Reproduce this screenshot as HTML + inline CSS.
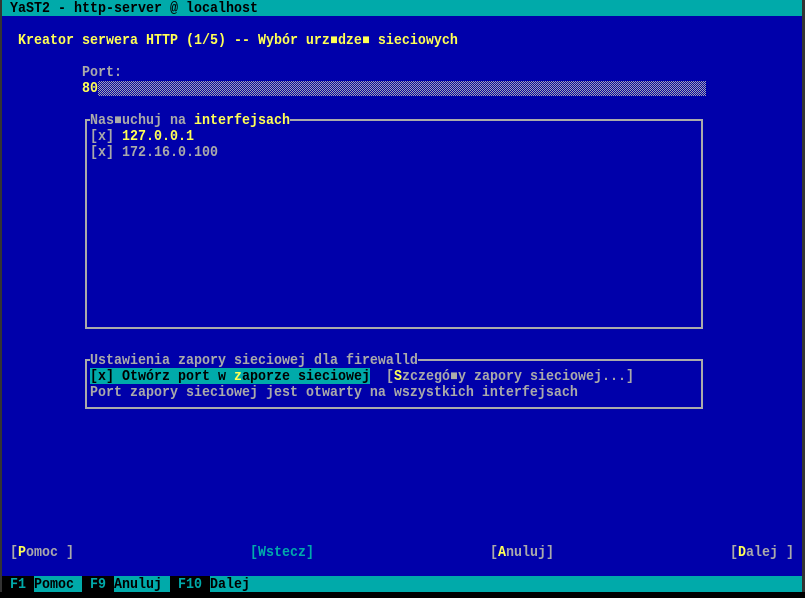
<!DOCTYPE html>
<html><head><meta charset="utf-8"><style>
html,body{margin:0;padding:0;background:#000;}
#s{position:relative;width:805px;height:598px;background:#000;overflow:hidden;font-family:"Liberation Mono","DejaVu Sans Mono",monospace;font-size:13.33px;line-height:16px;font-weight:bold;}
#scr{position:absolute;left:2px;top:0;width:800px;height:592px;background:#0000aa;}
#edge{position:absolute;left:0;top:0;width:2px;height:592px;background:#333;}
#edgeR{position:absolute;left:802px;top:0;width:3px;height:592px;background:#333;}
.r{position:absolute;white-space:pre;height:16px;color:#aaa;}
.t{display:inline-block;transform:translateY(2px) scaleY(1.12);transform-origin:50% 50%;}
.y{color:#ffff55}.k{color:#000}.c{color:#00aaaa}
.b{display:inline-block;width:6px;height:6px;background:#aaa;vertical-align:1px;margin:0 1px;}
.by{background:#ffff55}
.fr{position:absolute;border:2px solid #aaa;box-sizing:border-box;}
</style></head><body><div id="s">
<div id="edge"></div><div id="edgeR"></div>
<div id="scr">
<div style="position:absolute;left:0;top:0;width:800px;height:16px;background:#00aaaa"></div>
<div class="r k" style="left:8px;top:0"><span class="t">YaST2 - http-server @ localhost</span></div>
<div class="r y" style="left:16px;top:32px"><span class="t">Kreator serwera HTTP (1/5) -- Wybór urz<span class="b by"></span>dze<span class="b by"></span> sieciowych</span></div>
<div class="r" style="left:80px;top:64px"><span class="t">Port:</span></div>
<div style="position:absolute;left:96px;top:81px;width:608px;height:15px;background:repeating-conic-gradient(#aaa 0 25%,#0000aa 0 50%) 0 0/2px 2px"></div>
<div class="r y" style="left:80px;top:80px"><span class="t">80</span></div>

<div class="fr" style="left:83px;top:119px;width:618px;height:210px"></div>
<div class="r" style="left:88px;top:112px;background:#0000aa"><span class="t">Nas<span class="b"></span>uchuj na <span class="y">interfejsach</span></span></div>
<div class="r" style="left:88px;top:128px"><span class="t">[x] <span class="y">127.0.0.1</span></span></div>
<div class="r" style="left:88px;top:144px"><span class="t">[x] 172.16.0.100</span></div>

<div class="fr" style="left:83px;top:359px;width:618px;height:50px"></div>
<div class="r" style="left:88px;top:352px;background:#0000aa"><span class="t">Ustawienia zapory sieciowej dla firewalld</span></div>
<div class="r k" style="left:88px;top:368px;background:#00aaaa"><span class="t">[x] Otwórz port w <span class="y">z</span>aporze sieciowej</span></div>
<div class="r" style="left:384px;top:368px"><span class="t">[<span class="y">S</span>zczegó<span class="b"></span>y zapory sieciowej...]</span></div>
<div class="r" style="left:88px;top:384px"><span class="t">Port zapory sieciowej jest otwarty na wszystkich interfejsach</span></div>

<div class="r" style="left:8px;top:544px"><span class="t">[<span class="y">P</span>omoc ]</span></div>
<div class="r c" style="left:248px;top:544px"><span class="t">[Wstecz]</span></div>
<div class="r" style="left:488px;top:544px"><span class="t">[<span class="y">A</span>nuluj]</span></div>
<div class="r" style="left:728px;top:544px"><span class="t">[<span class="y">D</span>alej ]</span></div>

<div style="position:absolute;left:0;top:576px;width:800px;height:16px;background:#00aaaa"></div>
<div class="r c" style="left:0;top:576px;background:#000"><span class="t"> F1 </span></div>
<div class="r k" style="left:32px;top:576px"><span class="t">Pomoc </span></div>
<div class="r c" style="left:80px;top:576px;background:#000"><span class="t"> F9 </span></div>
<div class="r k" style="left:112px;top:576px"><span class="t">Anuluj </span></div>
<div class="r c" style="left:168px;top:576px;background:#000"><span class="t"> F10 </span></div>
<div class="r k" style="left:208px;top:576px"><span class="t">Dalej</span></div>
</div>
</div></body></html>
